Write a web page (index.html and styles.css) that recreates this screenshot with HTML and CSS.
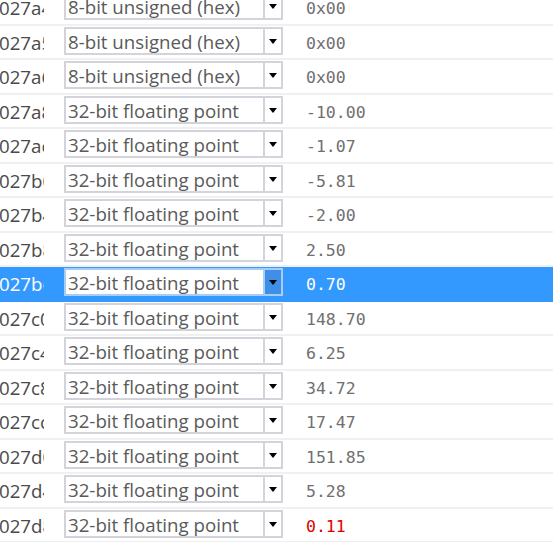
FILE: index.html
```html
<!DOCTYPE html>
<html>
<head>
<meta charset="utf-8">
<link rel="stylesheet" href="styles.css">
</head>
<body>
<div class="grid">
  <div class="row"><div class="addr">027a4</div><div class="combo"><span class="label">8-bit unsigned (hex)</span><span class="btn"><i class="arrow"></i></span></div><div class="val">0x00</div></div>
  <div class="row"><div class="addr">027a5</div><div class="combo"><span class="label">8-bit unsigned (hex)</span><span class="btn"><i class="arrow"></i></span></div><div class="val">0x00</div></div>
  <div class="row"><div class="addr">027a6</div><div class="combo"><span class="label">8-bit unsigned (hex)</span><span class="btn"><i class="arrow"></i></span></div><div class="val">0x00</div></div>
  <div class="row"><div class="addr">027a8</div><div class="combo"><span class="label">32-bit floating point</span><span class="btn"><i class="arrow"></i></span></div><div class="val">-10.00</div></div>
  <div class="row"><div class="addr">027ac</div><div class="combo"><span class="label">32-bit floating point</span><span class="btn"><i class="arrow"></i></span></div><div class="val">-1.07</div></div>
  <div class="row"><div class="addr">027b0</div><div class="combo"><span class="label">32-bit floating point</span><span class="btn"><i class="arrow"></i></span></div><div class="val">-5.81</div></div>
  <div class="row"><div class="addr">027b4</div><div class="combo"><span class="label">32-bit floating point</span><span class="btn"><i class="arrow"></i></span></div><div class="val">-2.00</div></div>
  <div class="row"><div class="addr">027b8</div><div class="combo"><span class="label">32-bit floating point</span><span class="btn"><i class="arrow"></i></span></div><div class="val">2.50</div></div>
  <div class="row selected"><div class="addr">027bc</div><div class="combo"><span class="label">32-bit floating point</span><span class="btn"><i class="arrow"></i></span></div><div class="val">0.70</div></div>
  <div class="row"><div class="addr">027c0</div><div class="combo"><span class="label">32-bit floating point</span><span class="btn"><i class="arrow"></i></span></div><div class="val">148.70</div></div>
  <div class="row"><div class="addr">027c4</div><div class="combo"><span class="label">32-bit floating point</span><span class="btn"><i class="arrow"></i></span></div><div class="val">6.25</div></div>
  <div class="row"><div class="addr">027c8</div><div class="combo"><span class="label">32-bit floating point</span><span class="btn"><i class="arrow"></i></span></div><div class="val">34.72</div></div>
  <div class="row"><div class="addr">027cc</div><div class="combo"><span class="label">32-bit floating point</span><span class="btn"><i class="arrow"></i></span></div><div class="val">17.47</div></div>
  <div class="row"><div class="addr">027d0</div><div class="combo"><span class="label">32-bit floating point</span><span class="btn"><i class="arrow"></i></span></div><div class="val">151.85</div></div>
  <div class="row"><div class="addr">027d4</div><div class="combo"><span class="label">32-bit floating point</span><span class="btn"><i class="arrow"></i></span></div><div class="val">5.28</div></div>
  <div class="row"><div class="addr">027d8</div><div class="combo"><span class="label">32-bit floating point</span><span class="btn"><i class="arrow"></i></span></div><div class="val changed">0.11</div></div>
</div>
</body>
</html>
```

FILE: styles.css
```css
html, body {
  margin: 0;
  padding: 0;
  background: #ffffff;
  overflow: hidden;
}
body {
  width: 553px;
  height: 542px;
}
.grid {
  margin-top: -9px;
  display: flex;
  flex-direction: column;
}
.row {
  display: flex;
  align-items: flex-start;
  height: 35px;
  box-sizing: border-box;
  border-bottom: 2px solid #f0f0f0;
  padding-top: 1px;
  font-family: "Open Sans", "Noto Sans", sans-serif;
  font-size: 18.7px;
  color: #5a5a5a;
}
.row:nth-child(even) {
  height: 34px;
}
.row.selected {
  background: #3399ff;
  border-bottom-color: #3399ff;
  color: #ffffff;
}
.addr {
  width: 45px;
  margin-left: -1px;
  overflow: hidden;
  white-space: nowrap;
  line-height: 32px;
  color: #4a4a4a;
  flex: none;
}
.selected .addr {
  color: #ffffff;
}
.combo {
  margin-left: 20px;
  width: 219px;
  height: 28px;
  box-sizing: border-box;
  border: 2px solid #d3d3dc;
  background: #ffffff;
  display: flex;
  flex: none;
}
.label {
  flex: 1;
  padding-left: 2px;
  padding-top: 1px;
  line-height: 24px;
  color: #5a5a5a;
  white-space: nowrap;
  overflow: hidden;
}
.btn {
  width: 16px;
  border-left: 2px solid #d3d3dc;
  display: flex;
  align-items: center;
  justify-content: center;
}
.arrow {
  display: block;
  width: 0;
  height: 0;
  border-left: 4px solid transparent;
  border-right: 4px solid transparent;
  border-top: 5px solid #000000;
}
.selected .combo {
  border-color: #a8cdf5;
}
.selected .btn {
  background: #3d8fe8;
  border-left-color: #a8cdf5;
}
.val {
  margin-left: 23px;
  font-family: "DejaVu Sans Mono", monospace;
  font-size: 16.5px;
  line-height: 33px;
  color: #707070;
}
.selected .val {
  color: #ffffff;
}
.val.changed {
  color: #e00000;
}
```
